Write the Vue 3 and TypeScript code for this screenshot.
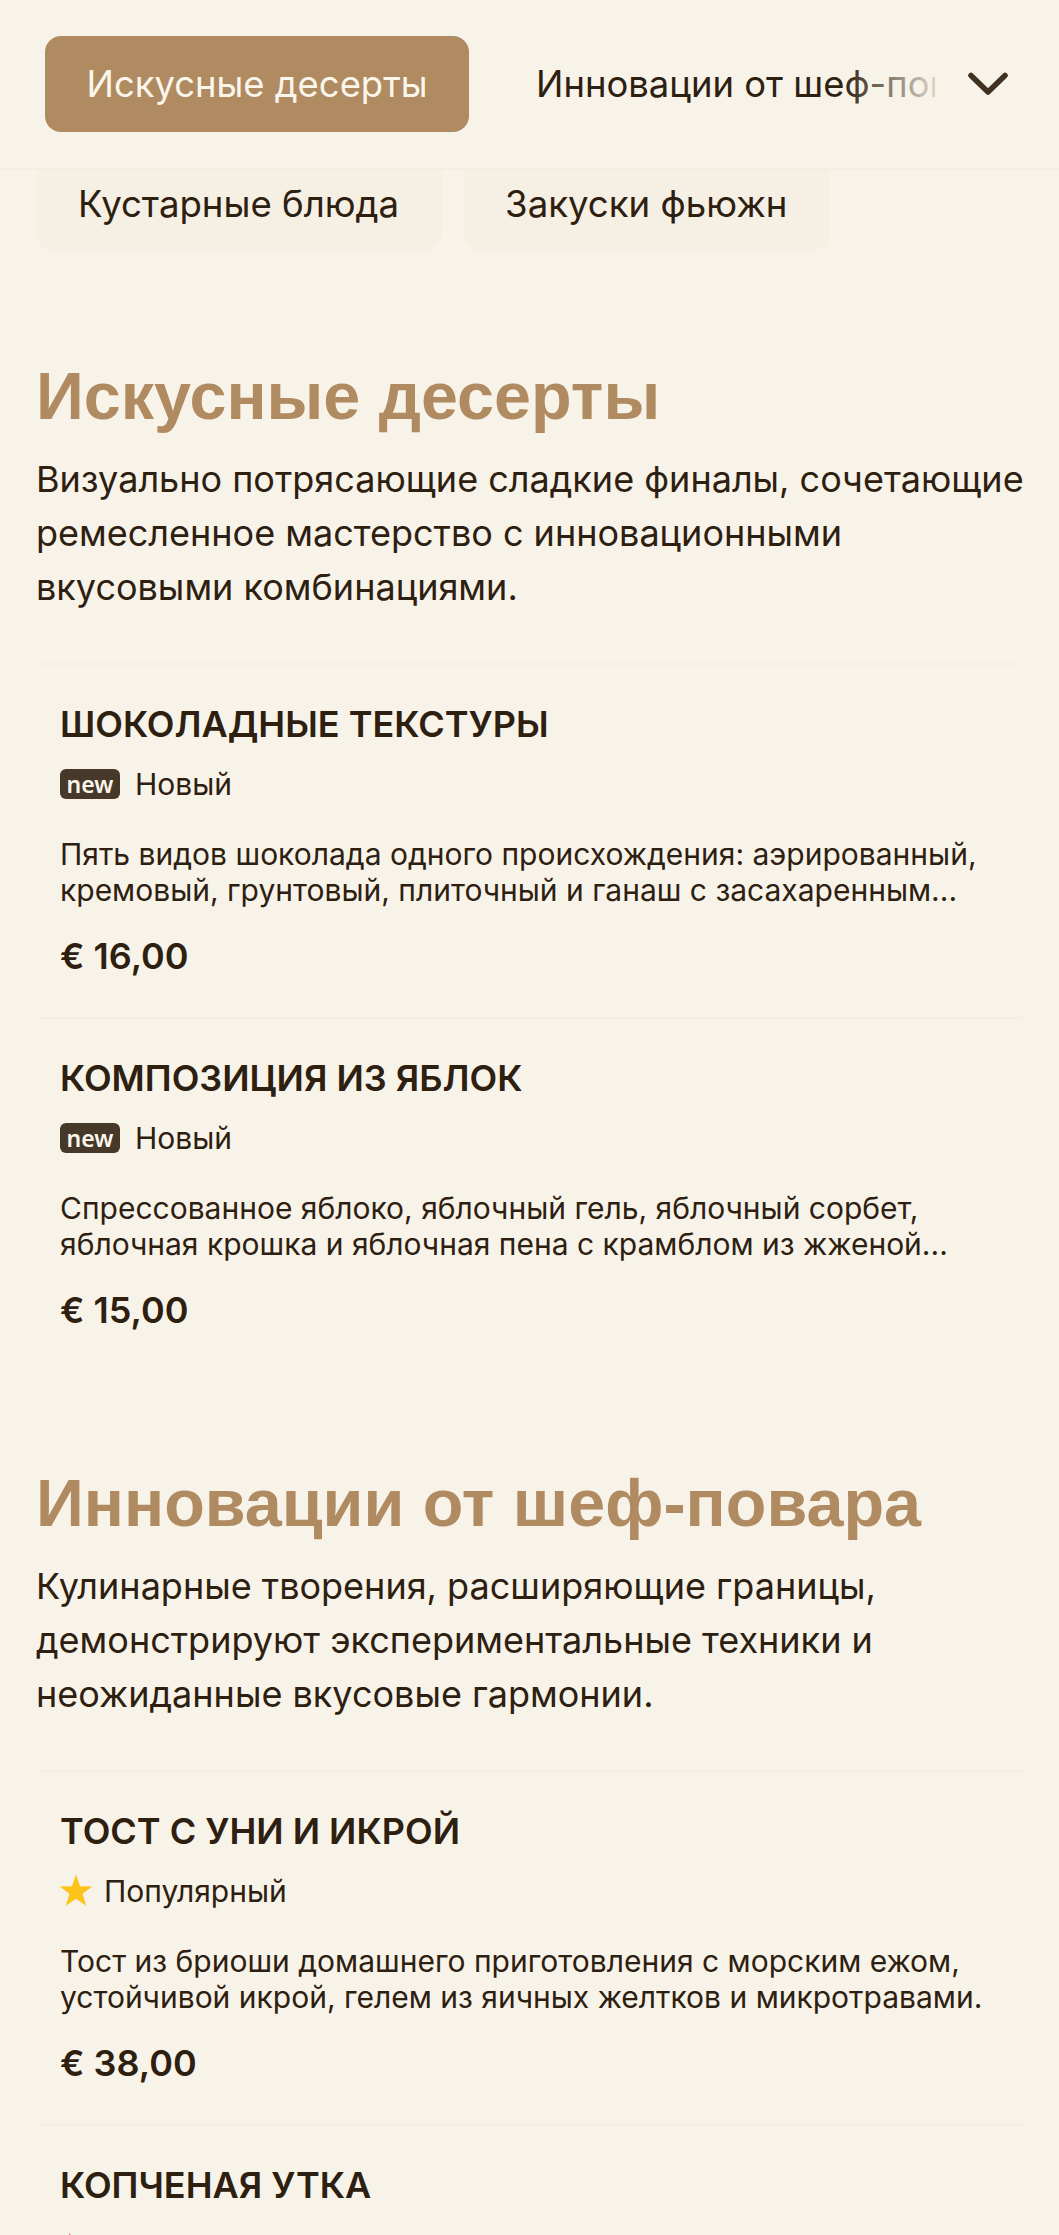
<script setup lang="ts">
interface Item { name: string; tag: 'new' | 'star' | 'hot'; label: string; desc: string[]; price: string }
interface Section { title: string; intro: string[]; items: Item[] }

const sections: Section[] = [
  {
    title: 'Искусные десерты',
    intro: ['Визуально потрясающие сладкие финалы, сочетающие', 'ремесленное мастерство с инновационными', 'вкусовыми комбинациями.'],
    items: [
      { name: 'ШОКОЛАДНЫЕ ТЕКСТУРЫ', tag: 'new', label: 'Новый', desc: ['Пять видов шоколада одного происхождения: аэрированный,', 'кремовый, грунтовый, плиточный и ганаш с засахаренным...'], price: '€ 16,00' },
      { name: 'КОМПОЗИЦИЯ ИЗ ЯБЛОК', tag: 'new', label: 'Новый', desc: ['Спрессованное яблоко, яблочный гель, яблочный сорбет,', 'яблочная крошка и яблочная пена с крамблом из жженой...'], price: '€ 15,00' },
    ],
  },
  {
    title: 'Инновации от шеф-повара',
    intro: ['Кулинарные творения, расширяющие границы,', 'демонстрируют экспериментальные техники и', 'неожиданные вкусовые гармонии.'],
    items: [
      { name: 'ТОСТ С УНИ И ИКРОЙ', tag: 'star', label: 'Популярный', desc: ['Тост из бриоши домашнего приготовления с морским ежом,', 'устойчивой икрой, гелем из яичных желтков и микротравами.'], price: '€ 38,00' },
      { name: 'КОПЧЕНАЯ УТКА', tag: 'hot', label: '', desc: [], price: '' },
    ],
  },
]
</script>

<template>
  <div class="page">
    <header class="topbar">
      <div class="tabs">
        <span class="tab active">Искусные десерты</span>
        <span class="tab">Инновации от шеф-повара</span>
        <span class="fade"></span>
      </div>
      <svg class="chevron" viewBox="0 0 40 24" width="40" height="24" fill="none">
        <path d="M3 3.5 L20 20 L37 3.5" stroke="#40301f" stroke-width="5.5" stroke-linecap="round" stroke-linejoin="round" />
      </svg>
    </header>
    <div class="pills">
      <span class="pill">Кустарные блюда</span>
      <span class="pill">Закуски фьюжн</span>
    </div>
    <main>
      <section v-for="s in sections" :key="s.title" class="section">
        <h2>{{ s.title }}</h2>
        <p class="intro"><span v-for="l in s.intro" :key="l" class="line">{{ l }}</span></p>
        <ul class="items">
          <li v-for="it in s.items" :key="it.name" class="item">
            <h3>{{ it.name }}</h3>
            <div class="meta">
              <span v-if="it.tag === 'new'" class="badge">new</span>
              <svg v-else-if="it.tag === 'star'" class="star" viewBox="0 0 24 24" width="36" height="36">
                <path d="M12 1 L14.7 8.8 L22.9 9 L16.4 13.9 L18.8 21.8 L12 17.1 L5.2 21.8 L7.6 13.9 L1.1 9 L9.3 8.8 Z" fill="#fcc419" />
              </svg>
              <svg v-else class="hot" viewBox="0 0 24 24" width="32" height="32">
                <path d="M8 3 C9 7 17 10 17 17 A6 6 0 0 1 5 17 C5 10 7 7 8 3 Z" fill="#d9534f" />
              </svg>
              <span v-if="it.label" class="label">{{ it.label }}</span>
            </div>
            <p v-if="it.desc.length" class="desc"><span v-for="l in it.desc" :key="l" class="line">{{ l }}</span></p>
            <div v-if="it.price" class="price">{{ it.price }}</div>
          </li>
        </ul>
      </section>
    </main>
  </div>
</template>

<style>
html, body { margin: 0; background: #f8f3e9; }
</style>

<style scoped>
.page {
  width: 1059px;
  height: 2235px;
  overflow: hidden;
  background: #f8f3e9;
  color: #2e2010;
  font-family: Inter, "Liberation Sans", sans-serif;
}
.topbar {
  position: relative;
  z-index: 2;
  height: 168px;
  background: #f8f3e9;
  border-bottom: 2px solid #f3ede2;
  display: flex;
  align-items: center;
  justify-content: space-between;
  padding: 0 51px 0 45px;
}
.tabs {
  position: relative;
  width: 890px;
  display: flex;
  align-items: center;
  gap: 67px;
  overflow: hidden;
  white-space: nowrap;
  height: 96px;
}
.tab {
  font-size: 36.4px;
  flex: none;
}
.tab.active {
  width: 424px;
  height: 96px;
  box-sizing: border-box;
  display: flex;
  align-items: center;
  justify-content: center;
  background: #b08a60;
  color: #fbf6ec;
  border-radius: 16px;
}
.fade {
  position: absolute;
  right: 0;
  top: 0;
  width: 93px;
  height: 96px;
  background: linear-gradient(to right, rgba(248, 243, 233, 0), rgba(248, 243, 233, 0.85) 100%);
}
.chevron { flex: none; }
.pills {
  display: flex;
  gap: 21px;
  padding: 0 36px;
  margin-top: -14px;
}
.pill {
  height: 96px;
  padding: 0 43px 0 42px;
  display: flex;
  align-items: center;
  background: #f6efe4;
  border-radius: 20px;
  font-size: 36.6px;
}
.section { padding: 0 36px; }
.section:first-child { padding-top: 107px; }
.section + .section { padding-top: 95px; }
h2 {
  margin: 0;
  font: 700 66.5px/74px "Liberation Sans", Arial, sans-serif;
  color: #b08a60;
}
.intro {
  margin: 19px 0 0;
  font-size: 36px;
  line-height: 54px;
  color: #2e2010;
}
.line { display: block; white-space: nowrap; }
.items { list-style: none; margin: 49px 0 0; padding: 0; }
.item {
  border-top: 2px solid #f4eee3;
  padding: 37px 24px 0;
  height: 354px;
  box-sizing: border-box;
}
h3 {
  margin: 0;
  font-size: 36px;
  line-height: 44px;
  font-weight: 600;
}
.meta {
  display: flex;
  align-items: center;
  margin-top: 16px;
  height: 44px;
}
.badge {
  width: 60px;
  height: 30px;
  display: flex;
  align-items: center;
  justify-content: center;
  border-radius: 6px;
  background: #46392a;
  color: #fbf6ec;
  font-family: "Noto Sans", sans-serif;
  font-size: 23px;
  font-weight: 600;
  line-height: 1;
  margin-right: 15px;
}
.star { margin: 0 10px 0 -2px; flex: none; }
.hot { margin: 0 14px 0 -1px; flex: none; }
.label { font-size: 30px; }
.desc {
  margin: 30px 0 0;
  font-size: 30px;
  line-height: 36px;
}
.price {
  margin-top: 26px;
  font-size: 36px;
  line-height: 44px;
  font-weight: 600;
}
</style>
